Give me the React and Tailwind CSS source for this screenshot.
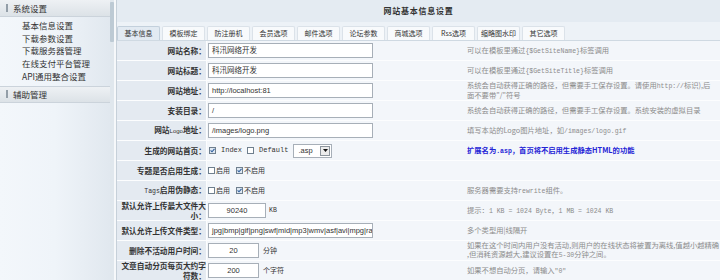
import React from "react";

const M = ({ children }) => (
  <span className="font-['Liberation_Mono',monospace] text-[6.5px]">{children}</span>
);

const Check = ({ on }) => (
  <svg width="7" height="7" viewBox="0 0 7 7" className="shrink-0">
    <rect x="0.5" y="0.5" width="6" height="6" fill={on ? "#dfe8f2" : "#fff"} stroke="#6f7f8e" strokeWidth="1" />
    {on && <path d="M1.6 3.4 L3 4.8 L5.5 1.9" fill="none" stroke="#2f5f9e" strokeWidth="1.1" />}
  </svg>
);

const Input = ({ w, value, center }) => (
  <div
    className={`h-[15px] border border-[#a7afb8] bg-white flex items-center px-[3px] text-[7.5px] text-[#333] overflow-hidden whitespace-nowrap font-['Liberation_Sans','Noto_Sans_CJK_SC',sans-serif] ${
      center ? "justify-center" : ""
    }`}
    style={{ width: w }}
  >
    {value}
  </div>
);

const Row = ({ label, children, desc, blue }) => (
  <div className="h-[20px] flex border-b border-[#fcfdfe] shrink-0">
    <div className="w-[90px] shrink-0 bg-[#e4eaf1] border-r border-[#fcfdfe] flex items-center justify-end text-right text-[7.7px] leading-[9.5px] font-bold text-[#333] pl-[2px]">
      <span>{label}</span>
    </div>
    <div className="w-[259px] shrink-0 bg-[#f3f6fa] flex items-center pl-[1px] gap-[4px]">{children}</div>
    <div
      className={`flex-1 bg-[#f3f6fa] flex items-center pl-[1px] text-[7.3px] leading-[9px] whitespace-nowrap ${
        blue ? "text-[#2424d6] font-bold" : "text-[#8c8c8c]"
      }`}
    >
      <div>{desc}</div>
    </div>
  </div>
);

const tabs = ["基本信息", "模板绑定", "防注册机", "会员选项", "邮件选项", "论坛参数", "商城选项", "Rss选项", "缩略图水印", "其它选项"];

export default function App() {
  return (
    <div className="w-[720px] h-[280px] overflow-hidden flex bg-white font-['Noto_Sans_CJK_SC',sans-serif] text-[#333]">
      {/* Sidebar */}
      <div className="w-[110px] shrink-0 flex flex-col bg-gradient-to-r from-[#f3f7fb] via-[#eff4f9] to-[#e1e8ef]">
        <div className="h-[17px] shrink-0 flex items-center pl-[6px] gap-[5px] bg-gradient-to-b from-[#eef1f4] to-[#dce2e7] border-b border-[#cbd3db] text-[8.5px]">
          <span className="w-[2px] h-[8px] bg-[#939ea8]" />
          <span>系统设置</span>
        </div>
        <div className="flex flex-col pt-[2px] pb-[3px] pl-[22px] text-[8.5px] leading-[12.7px] text-[#333]">
          <span>基本信息设置</span>
          <span>下载参数设置</span>
          <span>下载服务器管理</span>
          <span>在线支付平台管理</span>
          <span>API通用整合设置</span>
        </div>
        <div className="h-[17px] shrink-0 flex items-center pl-[6px] gap-[5px] bg-gradient-to-b from-[#eef1f4] to-[#dce2e7] border-t border-b border-[#cbd3db] text-[8.5px]">
          <span className="w-[2px] h-[8px] bg-[#939ea8]" />
          <span>辅助管理</span>
        </div>
        <div className="flex-1" />
      </div>
      {/* scrollbar strip */}
      <div className="w-[4px] shrink-0 flex flex-col bg-[#e0e7ed]">
        <div className="h-[40px] mt-[2px] bg-[#bdcad4] rounded-[1px]" />
      </div>
      <div className="w-[2px] shrink-0 bg-[#f6f8fa]" />
      {/* Main */}
      <div className="flex-1 flex flex-col border-l border-[#c6d0d9] min-w-0">
        <div className="h-[22px] shrink-0 flex items-center justify-center bg-[#e4ebf2] text-[8px] font-bold tracking-[0.75px] text-[#333]">
          网站基本信息设置
        </div>
        <div className="h-[19px] shrink-0 bg-[#edf2f7] flex items-end gap-[2px] border-b border-[#cfd9e2]">
          {tabs.map((t, i) => (
            <div
              key={t}
              className={`w-[43px] h-[14px] flex items-center justify-center text-[7px] text-[#333] border border-b-0 rounded-t-[2px] ${
                i === 0 ? "bg-[#e2eaf2] border-[#c3d0dc]" : "bg-[#f8fafc] border-[#dbe2e9]"
              }`}
            >
              {t}
            </div>
          ))}
        </div>
        <Row label="网站名称：" desc={<>可以在模板里通过<M>{"{$GetSiteName}"}</M>标签调用</>}>
          <Input w={165} value="科汛网络开发" />
        </Row>
        <Row label="网站标题：" desc={<>可以在模板里通过<M>{"{$GetSiteTitle}"}</M>标签调用</>}>
          <Input w={165} value="科汛网络开发" />
        </Row>
        <Row
          label="网站地址："
          desc={
            <>
              系统会自动获得正确的路径，但需要手工保存设置。请使用<M>http://</M>标识),后
              <br />
              面不要带"/"符号
            </>
          }
        >
          <Input w={165} value="http://localhost:81" />
        </Row>
        <Row label="安装目录：" desc={<>系统会自动获得正确的路径，但需要手工保存设置。系统安装的虚拟目录</>}>
          <Input w={165} value="/" />
        </Row>
        <Row
          label={
            <>
              网站<span className="text-[6px] font-normal font-['Liberation_Sans',sans-serif]">Logo</span>地址：
            </>
          }
          desc={<>填写本站的Logo图片地址，如<M>/images/logo.gif</M></>}
        >
          <Input w={165} value="/images/logo.png" />
        </Row>
        <Row label="生成的网站首页：" blue desc={<>扩展名为<M>.asp</M>，首页将不启用生成静态HTML的功能</>}>
          <div className="flex items-center gap-[5px] pl-[1px]">
            <Check on />
            <span className="font-['Liberation_Mono',monospace] text-[7px]">Index</span>
            <Check />
            <span className="font-['Liberation_Mono',monospace] text-[7px]">Default</span>
            <div className="w-[39px] h-[14px] border border-[#a7afb8] bg-white flex items-center justify-between pl-[4px] pr-[1px]">
              <span className="text-[7.5px] font-['Liberation_Sans',sans-serif]">.asp</span>
              <div className="w-[10px] h-[10px] border border-[#8d959d] bg-[#ececec] flex items-center justify-center">
                <svg width="5" height="3" viewBox="0 0 5 3">
                  <path d="M0 0 L5 0 L2.5 3 Z" fill="#111" />
                </svg>
              </div>
            </div>
          </div>
        </Row>
        <Row label="专题是否启用生成：" desc="">
          <div className="flex items-center text-[7px]">
            <Check />
            <span className="ml-[1px]">启用</span>
            <span className="ml-[6px]"><Check on /></span>
            <span className="ml-[1px]">不启用</span>
          </div>
        </Row>
        <Row
          label={
            <>
              <span className="text-[6.5px] font-normal font-['Liberation_Mono',monospace]">Tags</span>启用伪静态：
            </>
          }
          desc={<>服务器需要支持<M>rewrite</M>组件。</>}
        >
          <div className="flex items-center text-[7px]">
            <Check />
            <span className="ml-[1px]">启用</span>
            <span className="ml-[6px]"><Check on /></span>
            <span className="ml-[1px]">不启用</span>
          </div>
        </Row>
        <Row
          label={
            <>
              默认允许上传最大文件大
              <br />
              小：
            </>
          }
          desc={<>提示：<M>1 KB = 1024 Byte</M>，<M>1 MB = 1024 KB</M></>}
        >
          <div className="flex items-center gap-[3px]">
            <Input w={58} value="90240" center />
            <M>KB</M>
          </div>
        </Row>
        <Row label="默认允许上传文件类型：" desc="多个类型用|线隔开">
          <Input w={165} value="jpg|bmp|gif|png|swf|mid|mp3|wmv|asf|avi|mpg|ram" />
        </Row>
        <Row
          label="删除不活动用户时间："
          desc={
            <>
              如果在这个时间内用户没有活动,则用户的在线状态将被置为离线,值越小越精确
              <br />
              ,但消耗资源越大,建议设置在<M>5-30</M>分钟之间。
            </>
          }
        >
          <div className="flex items-center gap-[4px] text-[7px]">
            <Input w={51} value="20" center />
            <span>分钟</span>
          </div>
        </Row>
        <Row
          label={
            <>
              文章自动分页每页大约字
              <br />
              符数：
            </>
          }
          desc={<>如果不想自动分页，请输入<M>"0"</M></>}
        >
          <div className="flex items-center gap-[4px] text-[7px]">
            <Input w={51} value="200" center />
            <span>个字符</span>
          </div>
        </Row>
      </div>
    </div>
  );
}
